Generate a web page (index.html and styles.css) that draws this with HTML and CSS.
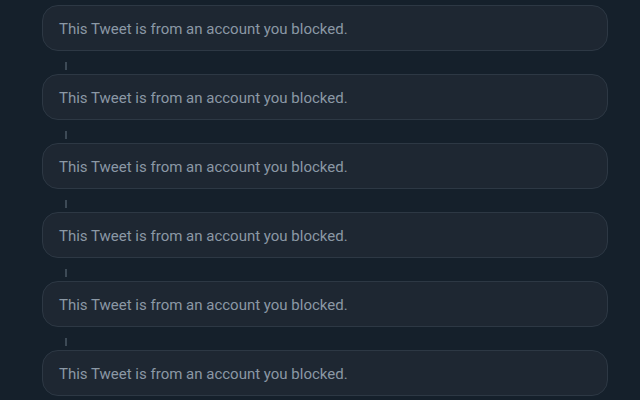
FILE: index.html
```html
<!DOCTYPE html>
<html>
<head>
	<meta http-equiv="Content-Type" content="text/html; charset=utf-8"/>
	<title></title>
	<link rel="stylesheet" href="styles.css">
</head>
<body>
<div class="thread">
	<div class="blocked">This Tweet is from an account you blocked.</div>
	<div class="link"><span></span></div>
	<div class="blocked">This Tweet is from an account you blocked.</div>
	<div class="link"><span></span></div>
	<div class="blocked">This Tweet is from an account you blocked.</div>
	<div class="link"><span></span></div>
	<div class="blocked">This Tweet is from an account you blocked.</div>
	<div class="link"><span></span></div>
	<div class="blocked">This Tweet is from an account you blocked.</div>
	<div class="link"><span></span></div>
	<div class="blocked">This Tweet is from an account you blocked.</div>
</div>
</body>
</html>
```
FILE: styles.css
```css
html {
    background: #15202b;
}

body {
    margin: 0;
    font-family: "Roboto", "Noto Sans", sans-serif;
    font-size: 15px;
}

.thread {
    padding: 5px 32px 0 42px;
    width: 566px;
}

.blocked {
    background: #1e2732;
    border: 1px solid #2d3844;
    border-radius: 16px;
    padding: 13px 16px 11px;
    line-height: 20px;
    color: #8b98a5;
}

.link {
    box-sizing: border-box;
    height: 23px;
    padding: 11px 0 0 23px;
}

.link span {
    display: block;
    width: 2px;
    height: 8px;
    background: #3d4a56;
}
```
